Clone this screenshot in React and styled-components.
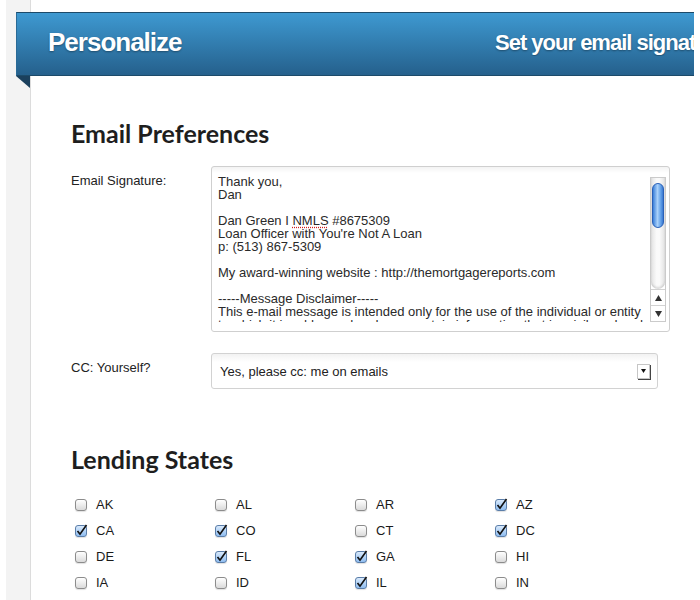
import React from "react";
import styled, { createGlobalStyle } from "styled-components";

const GlobalStyle = createGlobalStyle`
  html, body {
    margin: 0;
    padding: 0;
    background: #fff;
  }
  body {
    font-family: "Liberation Sans", Arial, sans-serif;
    font-size: 13px;
    color: #222;
  }
`;

const STATES = [
  ["AK", false], ["AL", false], ["AR", false], ["AZ", true],
  ["CA", true], ["CO", true], ["CT", false], ["DC", true],
  ["DE", false], ["FL", true], ["GA", true], ["HI", false],
  ["IA", false], ["ID", false], ["IL", true], ["IN", false],
];

const SIGNATURE = [
  "Thank you,",
  "Dan",
  "",
  null,
  "Loan Officer with You're Not A Loan",
  "p: (513) 867-5309",
  "",
  "My award-winning website : http://themortgagereports.com",
  "",
  "-----Message Disclaimer-----",
  "This e-mail message is intended only for the use of the individual or entity",
  "to which it is addressed and may contain information that is privileged and",
];

const App = () => {
  return (
    <>
      <GlobalStyle />
      <Page>
        <Rail />
        <Main>
          <Ribbon>
            <Title>Personalize</Title>
            <Subtitle>Set your email signature and preferences</Subtitle>
          </Ribbon>
          <Fold />

          <Content>
            <SectionHeading>Email Preferences</SectionHeading>

            <FieldRow>
              <Label>Email Signature:</Label>
              <TextBox>
                <TextBody>
                  {SIGNATURE.map((line, i) =>
                    line === null ? (
                      <Line key={i}>
                        Dan Green I <Misspelled>NMLS</Misspelled> #8675309
                      </Line>
                    ) : (
                      <Line key={i}>{line || "\u00a0"}</Line>
                    )
                  )}
                </TextBody>
                <Scrollbar>
                  <Track>
                    <Thumb />
                  </Track>
                  <ArrowButton>
                    <svg width="7" height="6" viewBox="0 0 7 6">
                      <path d="M3.5 0 L7 6 L0 6 Z" fill="#333" />
                    </svg>
                  </ArrowButton>
                  <ArrowButton>
                    <svg width="7" height="6" viewBox="0 0 7 6">
                      <path d="M0 0 L7 0 L3.5 6 Z" fill="#333" />
                    </svg>
                  </ArrowButton>
                </Scrollbar>
              </TextBox>
            </FieldRow>

            <FieldRow>
              <Label>CC: Yourself?</Label>
              <Select>
                <span>Yes, please cc: me on emails</span>
                <SelectArrow>
                  <svg width="5" height="4" viewBox="0 0 5 4">
                    <path d="M0 0 L5 0 L2.5 4 Z" fill="#111" />
                  </svg>
                </SelectArrow>
              </Select>
            </FieldRow>

            <SectionHeading $spaced>Lending States</SectionHeading>

            <StateGrid>
              {STATES.map(([code, checked]) => (
                <StateItem key={code}>
                  <Checkbox $checked={checked}>
                    {checked && (
                      <svg width="10" height="10" viewBox="0 0 10 10">
                        <path
                          d="M1.5 5 L4 8.2 L10.5 -1"
                          fill="none"
                          stroke="#111"
                          strokeWidth="1.7"
                        />
                      </svg>
                    )}
                  </Checkbox>
                  {code}
                </StateItem>
              ))}
            </StateGrid>
          </Content>
        </Main>
      </Page>
    </>
  );
};

const Page = styled.div`
  display: flex;
  min-height: 600px;
  padding-left: 6px;
  overflow: hidden;
`;

const Rail = styled.div`
  width: 24px;
  flex: none;
  background: #f3f3f3;
  border-right: 1px solid #dcdcdc;
`;

const Main = styled.div`
  flex: 1;
  min-width: 0;
  padding-top: 12px;
`;

const Ribbon = styled.header`
  display: grid;
  grid-template-columns: 478px 1fr;
  align-items: center;
  height: 62px;
  margin: 0 6px 0 -15px;
  background: linear-gradient(#3e99d1, #25608c);
  border-top: 1px solid #1c4a69;
  border-bottom: 1px solid #1c4a69;
  border-left: 1px solid #2a6a96;
  overflow: hidden;
  color: #fff;
  font-weight: bold;
  letter-spacing: -1px;
  text-shadow: 0 1px 2px rgba(0, 0, 0, 0.35);
`;

const Title = styled.h1`
  margin: 0 0 3px;
  padding-left: 31px;
  font-size: 26px;
`;

const Subtitle = styled.h2`
  margin: 0 0 3px;
  font-size: 22px;
  white-space: nowrap;
  overflow: hidden;
`;

const Fold = styled.div`
  width: 0;
  height: 0;
  margin-left: -15px;
  border-top: 12px solid #1b405d;
  border-left: 14px solid transparent;
`;

const Content = styled.div`
  padding-left: 40px;
`;

const SectionHeading = styled.h2`
  margin: ${(p) => (p.$spaced ? "55px 0 17px" : "30px 0 18px")};
  font-family: Lato, "Open Sans", sans-serif;
  font-size: 25px;
  line-height: 1.2;
  font-weight: bold;
  color: #1e1e1e;
`;

const FieldRow = styled.div`
  display: grid;
  grid-template-columns: 140px auto;
  align-items: start;
  margin-bottom: 21px;
`;

const Label = styled.label`
  padding-top: 8px;
  line-height: 13px;
`;

const TextBox = styled.div`
  display: flex;
  width: 459px;
  height: 166px;
  box-sizing: border-box;
  border: 1px solid #cfcfcf;
  border-radius: 3px;
  background: linear-gradient(#f3f3f3, #fff 6px);
`;

const TextBody = styled.div`
  flex: 1;
  height: 147px;
  padding: 8px 0 0 6px;
  overflow: hidden;
  color: #2a2a2a;
  line-height: 13px;
  white-space: nowrap;
`;

const Line = styled.div`
  height: 13px;
`;

const Misspelled = styled.span`
  text-decoration: underline dotted #d02020;
  text-underline-offset: 2px;
`;

const Scrollbar = styled.div`
  display: flex;
  flex-direction: column;
  width: 16px;
  height: 145px;
  box-sizing: border-box;
  margin: 10px 3px 0 0;
  border: 1px solid #cbcbcb;
  background: #fff;
`;

const Track = styled.div`
  flex: 1;
  padding: 5px 1px 0;
  background: linear-gradient(to right, #e2e2e2, #fafafa 40%, #fafafa 60%, #e2e2e2);
  border-bottom-left-radius: 7px;
  border-bottom-right-radius: 7px;
  box-shadow: inset 0 -2px 2px rgba(0, 0, 0, 0.12);
`;

const Thumb = styled.div`
  height: 45px;
  border-radius: 6px;
  border: 1px solid #2a61b8;
  box-sizing: border-box;
  background: linear-gradient(to right, #3a7fd9, #a9d1fa 45%, #5d9ce6 80%, #3a78d0);
`;

const ArrowButton = styled.div`
  display: flex;
  align-items: center;
  justify-content: center;
  height: 15px;
  border-top: 1px solid #d2d2d2;
  background: #fff;
`;

const Select = styled.div`
  display: flex;
  align-items: center;
  justify-content: space-between;
  width: 447px;
  height: 36px;
  box-sizing: border-box;
  padding: 0 7px 0 8px;
  border: 1px solid #d2d2d2;
  border-radius: 3px;
  background: linear-gradient(#f2f2f2, #fff 8px);
  color: #222;
`;

const SelectArrow = styled.span`
  display: flex;
  align-items: center;
  justify-content: center;
  width: 11px;
  height: 13px;
  border: 1px solid #c6c6c6;
  background: #fff;
  box-shadow: 1px 1px 0 #444;
`;

const StateGrid = styled.div`
  display: grid;
  grid-template-columns: repeat(4, 140px);
  grid-auto-rows: 26px;
  padding-left: 4px;
`;

const StateItem = styled.div`
  display: flex;
  align-items: center;
  gap: 9px;
  color: #1a1a1a;
`;

const Checkbox = styled.span`
  display: flex;
  width: 12px;
  height: 12px;
  flex: none;
  box-sizing: border-box;
  margin-top: 2px;
  border: 1px solid ${(p) => (p.$checked ? "#5b7ea9" : "#8c8c8c")};
  border-radius: 3px;
  background: ${(p) =>
    p.$checked
      ? "linear-gradient(#d9eafc, #8fbdf0)"
      : "linear-gradient(#ffffff, #dadada)"};
  box-shadow: 0 1px 1px rgba(0, 0, 0, 0.12);

  svg {
    overflow: visible;
  }
`;

export default App;
